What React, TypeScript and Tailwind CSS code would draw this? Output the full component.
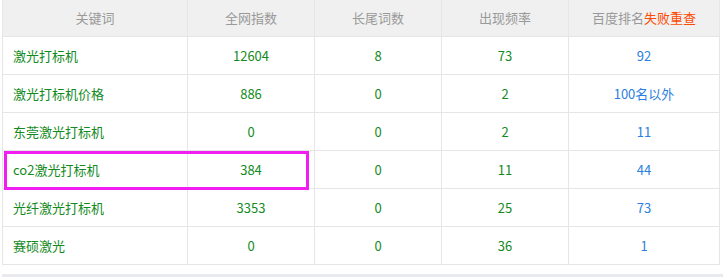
const rows = [
  { kw: '激光打标机', index: '12604', tail: '8', freq: '73', rank: '92' },
  { kw: '激光打标机价格', index: '886', tail: '0', freq: '2', rank: '100名以外' },
  { kw: '东莞激光打标机', index: '0', tail: '0', freq: '2', rank: '11' },
  { kw: 'co2激光打标机', index: '384', tail: '0', freq: '11', rank: '44' },
  { kw: '光纤激光打标机', index: '3353', tail: '0', freq: '25', rank: '73' },
  { kw: '赛硕激光', index: '0', tail: '0', freq: '36', rank: '1' },
];

const gridCols = 'grid grid-cols-[185px_127px_127px_127px_150px]';
const cell = 'flex items-center justify-center border-r border-[#e6e6e6]';

export default function App() {
  return (
    <div
      className="relative w-[723px] h-[277px] bg-white overflow-hidden text-[13px]"
      style={{ fontFamily: '"Microsoft YaHei", "Noto Sans CJK SC", "Noto Sans", sans-serif' }}
    >
      <div className="ml-[2px] w-[718px] border-l border-r border-[#e6e6e6]">
        <div className={`${gridCols} h-[37px] bg-[#f0f0f0] border-b border-[#e6e6e6] text-[#999]`}>
          <div className={cell}>关键词</div>
          <div className={cell}>全网指数</div>
          <div className={cell}>长尾词数</div>
          <div className={cell}>出现频率</div>
          <div className="flex items-center justify-center">
            百度排名<span className="text-[#ff4a00]">失败重查</span>
          </div>
        </div>
        {rows.map((r) => (
          <div key={r.kw} className={`${gridCols} h-[38px] border-b border-[#e6e6e6]`}>
            <div className="flex items-center pl-[10px] border-r border-[#e6e6e6] text-[#138a1e]">{r.kw}</div>
            <div className={`${cell} text-[#138a1e]`}>{r.index}</div>
            <div className={`${cell} text-[#138a1e]`}>{r.tail}</div>
            <div className={`${cell} text-[#138a1e]`}>{r.freq}</div>
            <div className="flex items-center justify-center text-[#2b7fe0]">{r.rank}</div>
          </div>
        ))}
      </div>
      <div className="ml-[2px] mt-[9px] h-[10px] bg-[#e8eaf0]" />
      <div className="absolute left-[4px] top-[151px] w-[305px] h-[39px] border-[3px] border-[#f01ef0]" />
    </div>
  );
}
